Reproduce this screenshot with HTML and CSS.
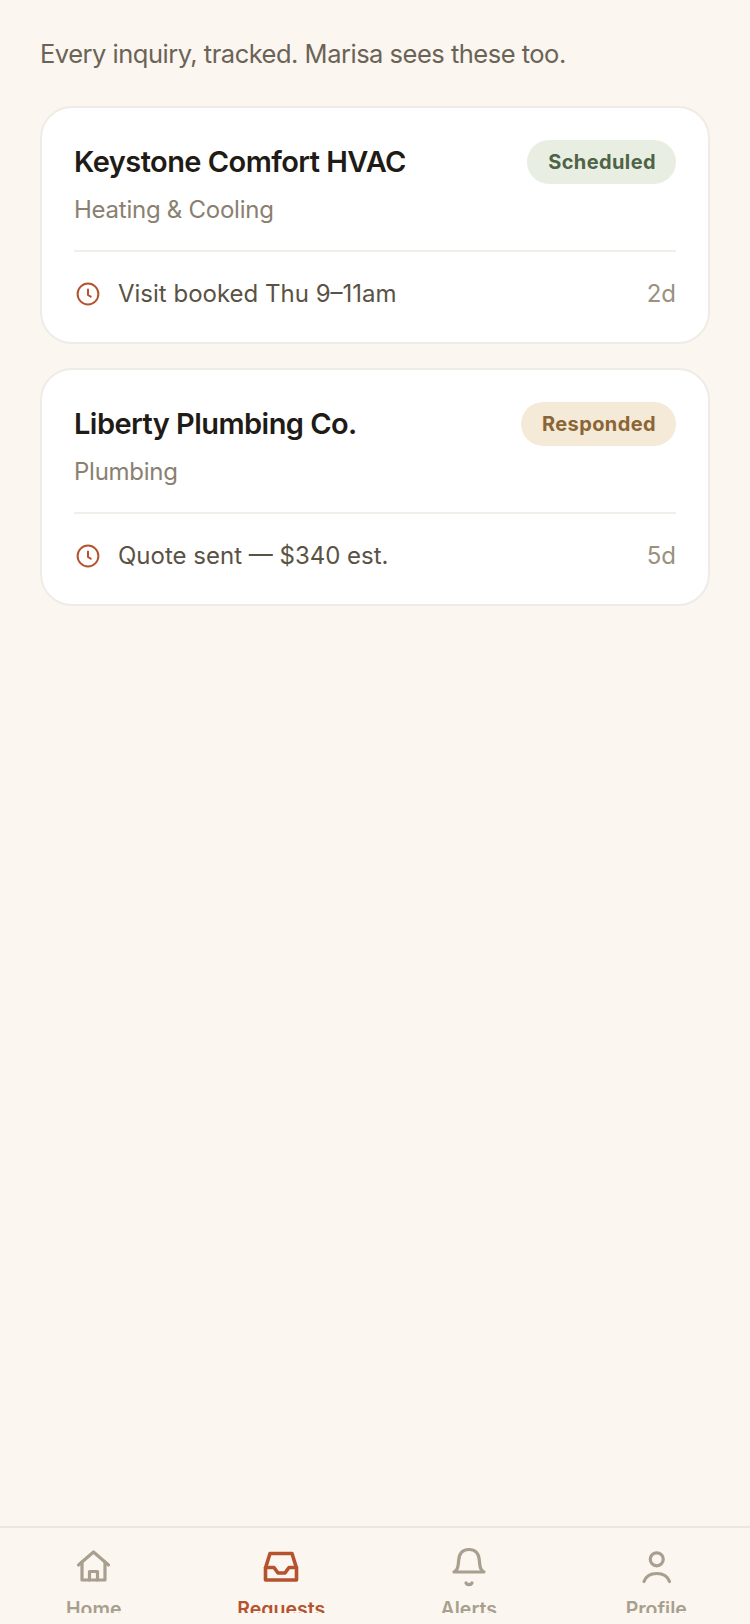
FILE: index.html
```html
<!DOCTYPE html>
<html lang="en">
<head>
    <meta charset="UTF-8">
    <meta name="viewport" content="width=device-width, initial-scale=1.0">
    <title>Requests</title>
    <link rel="stylesheet" href="styles.css">
</head>
<body>
    <div class="page">
        <main class="content">
            <p class="intro">Every inquiry, tracked. Marisa sees these too.</p>

            <div class="card">
                <div class="card-top">
                    <div class="card-name">Keystone Comfort HVAC</div>
                    <span class="pill pill-green">Scheduled</span>
                </div>
                <div class="card-cat">Heating &amp; Cooling</div>
                <div class="card-foot">
                    <svg class="clock" viewBox="0 0 28 28" fill="none" stroke="currentColor" stroke-width="2" stroke-linecap="round" stroke-linejoin="round"><circle cx="14" cy="14" r="10.4"/><path d="M14 9.5V15l2.7 1.7"/></svg>
                    <span class="card-status">Visit booked Thu 9–11am</span>
                    <span class="card-age">2d</span>
                </div>
            </div>

            <div class="card">
                <div class="card-top">
                    <div class="card-name">Liberty Plumbing Co.</div>
                    <span class="pill pill-tan">Responded</span>
                </div>
                <div class="card-cat">Plumbing</div>
                <div class="card-foot">
                    <svg class="clock" viewBox="0 0 28 28" fill="none" stroke="currentColor" stroke-width="2" stroke-linecap="round" stroke-linejoin="round"><circle cx="14" cy="14" r="10.4"/><path d="M14 9.5V15l2.7 1.7"/></svg>
                    <span class="card-status">Quote sent — $340 est.</span>
                    <span class="card-age">5d</span>
                </div>
            </div>
        </main>

        <nav class="tabbar">
            <div class="tabs">
                <a class="tab">
                    <svg class="tab-icon" viewBox="0 0 40 40" fill="none" stroke="currentColor" stroke-width="3.2" stroke-linecap="round" stroke-linejoin="round"><path d="M4.5 19 19.5 6l15 13"/><path d="M8 16v18h23V16"/><path d="M15.5 34v-8.500h8V34"/></svg>
                    <span>Home</span>
                </a>
                <a class="tab active">
                    <svg class="tab-icon" viewBox="0 0 40 40" fill="none" stroke="currentColor" stroke-width="3.6" stroke-linecap="round" stroke-linejoin="round"><path d="M4.500 22 9 7.500h22L35.500 22v12h-31z"/><path d="M4.500 21.500H13l4 5.500h7l4-5.500h7.500"/></svg>
                    <span>Requests</span>
                </a>
                <a class="tab">
                    <svg class="tab-icon" viewBox="0 0 40 40" fill="none" stroke="currentColor" stroke-width="3.2" stroke-linecap="round" stroke-linejoin="round"><path d="M5 26c2.500-1 3.800-3 4.300-8l.4-4C10.300 7 14 3.500 20 3.500S29.700 7 30.300 14l.4 4c.5 5 1.800 7 4.300 8z"/><path d="M17 37c1 2.200 5 2.200 6 0"/></svg>
                    <span>Alerts</span>
                </a>
                <a class="tab">
                    <svg class="tab-icon" viewBox="0 0 40 40" fill="none" stroke="currentColor" stroke-width="3.2" stroke-linecap="round" stroke-linejoin="round"><circle cx="20.750" cy="13.300" r="6.500"/><path d="M8 35.500c2-5.500 7-8 12.750-8s10.750 2.500 12.750 8"/></svg>
                    <span>Profile</span>
                </a>
            </div>
        </nav>
    </div>
</body>
</html>
```

FILE: styles.css
```css
* {
    box-sizing: border-box;
}

body {
    margin: 0;
    background-color: #fbf6f0;
    font-family: "Inter", "Liberation Sans", sans-serif;
}

.page {
    display: flex;
    flex-direction: column;
    height: 1624px;
    overflow: hidden;
}

.content {
    flex: 1;
    padding: 36px 40px 0;
}

.intro {
    margin: 0 0 34px;
    font-size: 25.5px;
    line-height: 36px;
    letter-spacing: -0.5px;
    color: #6b6356;
}

.card {
    background-color: #fff;
    border: 2px solid #efebe6;
    border-radius: 32px;
    padding: 32px 32px 30px;
    margin-bottom: 24px;
}

.card-top {
    display: flex;
    justify-content: space-between;
    align-items: center;
}

.card-name {
    margin-bottom: 2px;
    font-size: 29px;
    font-weight: 600;
    letter-spacing: -0.55px;
    color: #1f1b16;
}

.pill {
    height: 44px;
    line-height: 44px;
    padding: 0 20px 0 21px;
    border-radius: 22px;
    font-size: 20px;
    font-weight: 700;
    letter-spacing: 0.4px;
}

.pill-green {
    background-color: #e9eee3;
    color: #4f6347;
}

.pill-tan {
    background-color: #f5e9d7;
    color: #8a6535;
}

.card-cat {
    margin-top: 8px;
    font-size: 24px;
    line-height: 36px;
    letter-spacing: -0.25px;
    color: #8a8070;
}

.card-foot {
    display: flex;
    align-items: center;
    gap: 16px;
    margin-top: 22px;
    padding-top: 24px;
    border-top: 2px solid #f2efeb;
    font-size: 24px;
    line-height: 36px;
}

.clock {
    width: 28px;
    height: 28px;
    color: #b5532f;
}

.card-status {
    flex: 1;
    color: #5a5244;
}

.card-age {
    color: #9a917f;
}

.tabbar {
    height: 98px;
    border-top: 2px solid #ebe6df;
}

.tabs {
    display: flex;
    height: 85px;
    overflow: hidden;
    padding-top: 18px;
}

.tab {
    flex: 1;
    display: flex;
    flex-direction: column;
    align-items: center;
    font-size: 19.5px;
    font-weight: 600;
    line-height: 26px;
    color: #a89f8e;
}

.tab.active {
    color: #b5532f;
}

.tab-icon {
    width: 40px;
    height: 40px;
    margin-bottom: 10px;
    overflow: visible;
    flex-shrink: 0;
}
```
